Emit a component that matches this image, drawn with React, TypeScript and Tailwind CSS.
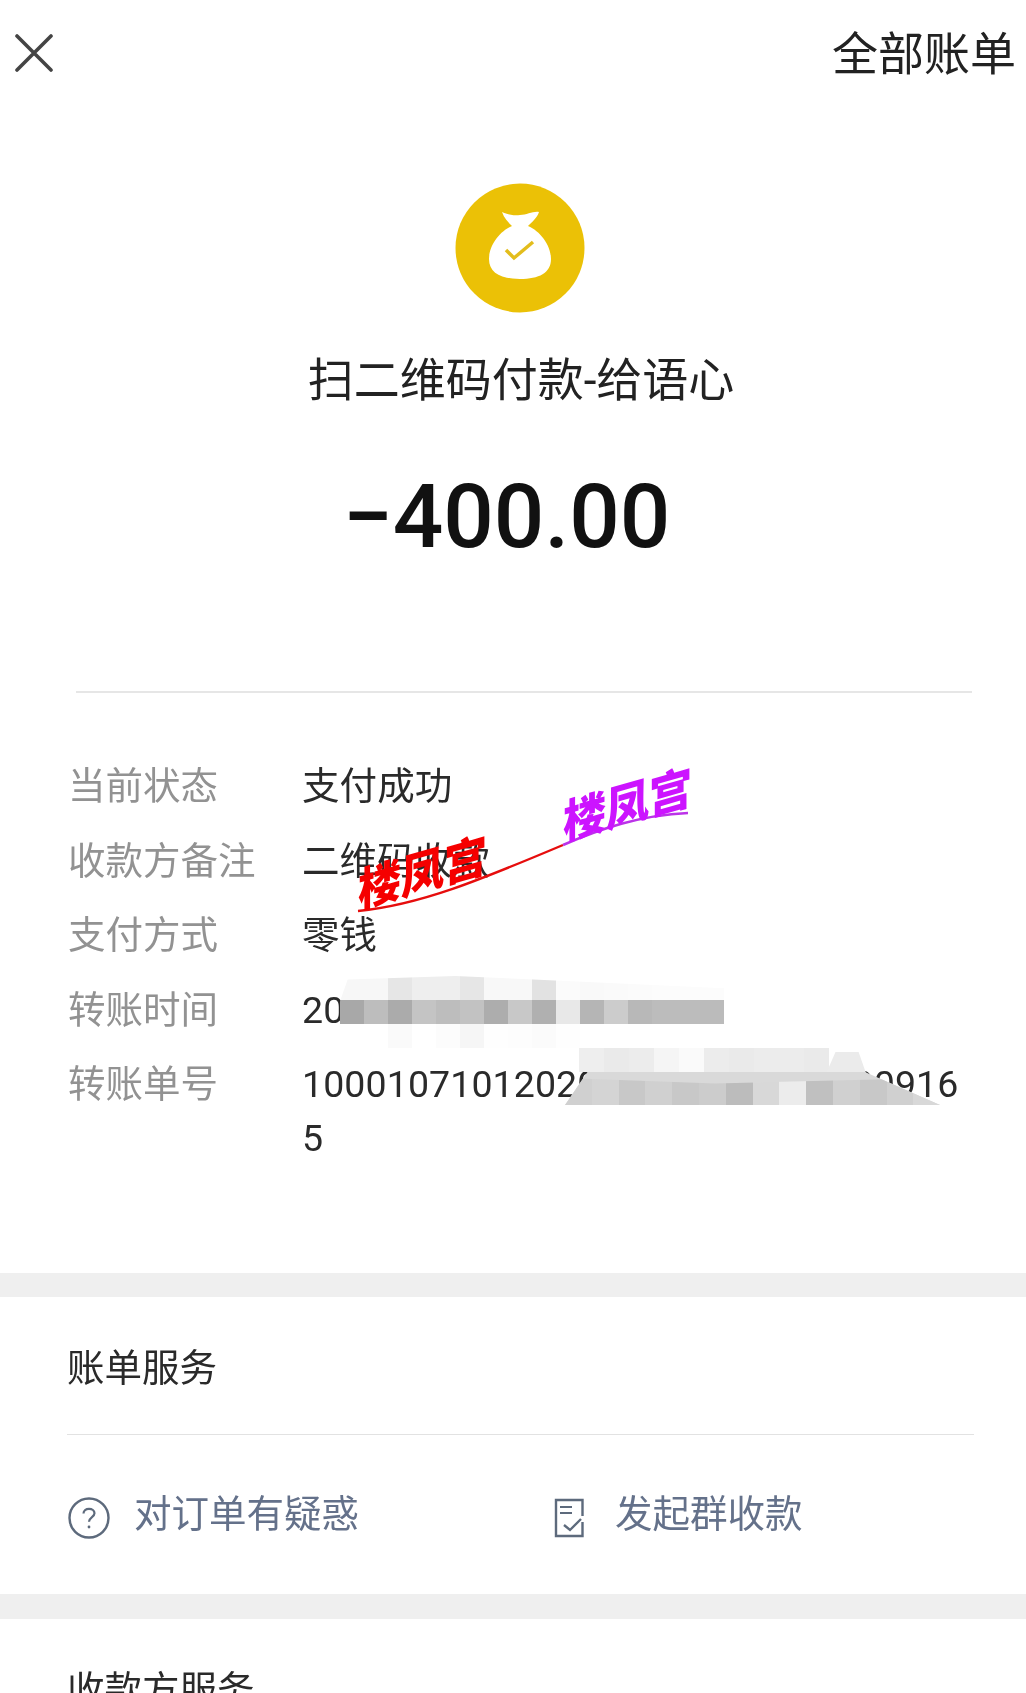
const FONT = "font-['Roboto','Noto_Sans_CJK_SC',sans-serif]";

const rows: [string, string][] = [
  ["当前状态", "支付成功"],
  ["收款方备注", "二维码收款"],
  ["支付方式", "零钱"],
  ["转账时间", "20"],
  ["转账单号", "10001071012020000000000000009165"],
];

const mosaicA = [
  ["bg-[#f7f7f7]", "bg-[#f7f7f7]", "bg-[#e6e6e6]", "bg-[#eeeeee]", "bg-[#eeeeee]", "bg-[#e6e6e6]", "bg-[#f8f8f8]", "bg-[#f8f8f8]", "bg-[#e2e2e2]", "bg-[#fbfbfb]", "bg-[#f9f9f9]", "bg-[#fafafa]", "bg-[#fbfbfb]", "bg-[#fcfcfc]", "bg-[#fcfcfc]", "bg-[#fcfcfc]"],
  ["bg-[#a8a8a8]", "bg-[#bdbdbd]", "bg-[#ababab]", "bg-[#c4c4c4]", "bg-[#bdbdbd]", "bg-[#c2c2c2]", "bg-[#adadad]", "bg-[#c8c8c8]", "bg-[#b0b0b0]", "bg-[#e8e8e8]", "bg-[#b5b5b5]", "bg-[#cccccc]", "bg-[#b8b8b8]", "bg-[#bcbcbc]", "bg-[#bcbcbc]", "bg-[#bbbbbb]"],
  ["bg-[#ffffff]", "bg-[#ffffff]", "bg-[#fafafa]", "bg-[#ffffff]", "bg-[#fcfcfc]", "bg-[#f6f6f6]", "bg-[#fefefe]", "bg-[#fdfdfd]", "bg-[#fbfbfb]", "bg-[#fefefe]", "bg-[#ffffff]", "bg-[#ffffff]", "bg-[#ffffff]", "bg-[#ffffff]", "bg-[#ffffff]", "bg-[#ffffff]"],
];
const mosaicTop = ["bg-[#eeeeee]", "bg-[#eaeaea]", "bg-[#ececec]", "bg-[#f5f5f5]", "bg-[#fafafa]", "bg-[#ececec]", "bg-[#eaeaea]", "bg-[#ececec]", "bg-[#ececec]", "bg-[#eaeaea]"];
const mosaicBottom = ["bg-[#d0d0d0]", "bg-[#d4d4d4]", "bg-[#c8c8c8]", "bg-[#d0d0d0]", "bg-[#c8c8c8]", "bg-[#cccccc]", "bg-[#bcbcbc]", "bg-[#d8d8d8]", "bg-[#ececec]", "bg-[#c0c0c0]", "bg-[#d0d0d0]", "bg-[#c8c8c8]", "bg-[#d0d0d0]", "bg-[#d8d8d8]"];

function Hero() {
  return (
    <div className="flex flex-col items-center">
      <svg viewBox="0 0 130 130" className="mt-[75px] ml-[14px] h-[130px] w-[130px]">
        <circle cx="65" cy="65" r="64.5" fill="#ebc106" />
        <path d="M47 29C52 31 58 33 65 32C72 32 78 28 84 29C82 35 77 39 73 43C85 48 96 62 96 76C96 90 84 96 65 96C46 96 34 90 34 76C34 62 45 48 57 43C53 39 49 35 47 29Z" fill="#ffffff" />
        <path d="M51 67L59 75L78 59" fill="none" stroke="#e3bd1c" strokeWidth="3.5" />
      </svg>
      <div className="mt-[37px] ml-[16px] h-[60px] text-[46px] leading-[60px] font-normal text-[#222]">扫二维码付款-给语心</div>
      <div className="mt-[62px] mr-[13px] h-[90px] text-[89px] leading-[90px] font-medium text-[#111]">−400.00</div>
    </div>
  );
}

function Details() {
  return (
    <div className="flex flex-col gap-[20.6px] pt-[66px] pl-[68px]">
      {rows.map(([k, v]) => (
        <div key={k} className="flex text-[37.5px] leading-[54px]">
          <div className="w-[234px] shrink-0 font-normal text-[#929292]">{k}</div>
          <div className="w-[665px] font-normal tracking-[0.1px] break-all text-[#2a2a2a]">{v}</div>
        </div>
      ))}
    </div>
  );
}

function QuestionIcon() {
  return (
    <svg viewBox="0 0 42 42" className="mt-2 h-[42px] w-[42px] shrink-0" fill="none" stroke="#5d6a7c" strokeWidth="2.4">
      <circle cx="21" cy="21" r="19.5" />
      <path d="M15.5 16.5C15.5 13.5 18 11.8 21 11.8C24 11.8 26.5 13.6 26.5 16.3C26.5 20 21 20.2 21 24.8" strokeWidth="2.2" />
      <circle cx="21" cy="30" r="1.4" fill="#5d6a7c" stroke="none" />
    </svg>
  );
}

function DocIcon() {
  return (
    <svg viewBox="0 0 30 40" className="mt-2 h-[40px] w-[30px] shrink-0" fill="none" stroke="#5d6a7c" strokeWidth="2.4">
      <path d="M28.5 18V2H2V38H28.5V24" />
      <path d="M6 9H18M6 15H18" strokeWidth="2.2" />
      <path d="M10 27L16 32L27 21" />
    </svg>
  );
}

export default function App() {
  return (
    <div className={`relative h-[1693px] w-[1026px] overflow-hidden bg-white blur-[0.5px] ${FONT}`}>
      <header className="flex h-[108px] items-center justify-between pr-[10px] pl-[15px]">
        <svg viewBox="0 0 38 38" className="mb-[2px] h-[38px] w-[38px]" fill="none" stroke="#444444" strokeWidth="3.6" strokeLinecap="round">
          <path d="M2 2L36 36M36 2L2 36" />
        </svg>
        <div className="text-[46px] leading-[60px] font-normal text-[#222]">全部账单</div>
      </header>

      <section className="h-[1165px]">
        <Hero />
        <div className="mt-[129px] mr-[54px] ml-[76px] h-[2px] bg-[#e6e6e6]" />
        <Details />
      </section>

      <div className="h-[24px] bg-[#efefef]" />

      <section className="h-[297px]">
        <div className="px-[67px] pt-[44px] pb-[39px] text-[37.5px] leading-[54px] font-normal text-[#2a2a2a]">账单服务</div>
        <div className="mr-[52px] ml-[67px] h-px bg-[#e2e2e2]" />
        <div className="flex h-[157px] items-center pl-[68px] text-[37.5px] leading-[54px] font-normal text-[#64718a]">
          <div className="flex w-[486px] items-center gap-[24px]">
            <QuestionIcon />
            <span>对订单有疑惑</span>
          </div>
          <div className="flex items-center gap-[31px]">
            <DocIcon />
            <span>发起群收款</span>
          </div>
        </div>
      </section>

      <div className="h-[25px] bg-[#efefef]" />

      <section className="px-[67px] pt-[44px] text-[37.5px] leading-[54px] font-normal text-[#2a2a2a]">收款方服务</section>

      {/* privacy mosaics lying over the details */}
      <div className="absolute top-[976px] left-[340px] flex flex-col [clip-path:polygon(2%_5%,30%_0,100%_17%,100%_100%,0_100%,0_35%)]">
        {mosaicA.map((row, i) => (
          <div key={i} className="flex">
            {row.map((c, j) => (
              <div key={j} className={`h-[24px] w-[24px] ${c}`} />
            ))}
          </div>
        ))}
      </div>
      <div className="absolute top-[1048px] left-[579px] flex">
        {mosaicTop.map((c, j) => (
          <div key={j} className={`h-[24px] w-[25px] ${c}`} />
        ))}
      </div>
      <div className="absolute top-[1052px] left-[825px] h-[24px] w-[42px] bg-[#ebebeb] [clip-path:polygon(25%_0,80%_0,100%_100%,0_100%)]" />
      <div className="absolute top-[1072px] left-[565px] h-[33px] w-[375px] bg-[#d9d9d9] [clip-path:polygon(6%_0,80%_0,100%_100%,0_100%)]">
        <div className="mt-[6px] flex [clip-path:polygon(0_0,40%_20%,100%_0,100%_100%,0_100%)]">
          {mosaicBottom.map((c, j) => (
            <div key={j} className={`h-[27px] w-[26.8px] shrink-0 ${c}`} />
          ))}
        </div>
      </div>

      {/* watermark */}
      <svg viewBox="0 0 1026 1693" className="absolute inset-0 h-[1693px] w-[1026px]" fill="none">
        <path d="M358 911C420 905 480 880 563 845" stroke="#e60d0d" strokeWidth="2.4" />
        <path d="M563 845C600 829 640 815 688 813" stroke="#bb33e8" strokeWidth="2.6" />
        <text transform="translate(358 908) skewY(-16) scale(1 1.08)" fontSize="43" fontWeight="900" fill="#f50000" fontFamily="'Noto Sans CJK SC', sans-serif">楼凤宫</text>
        <text transform="translate(563 840) skewY(-16) scale(1 1.08)" fontSize="43" fontWeight="900" fill="#cc14ff" fontFamily="'Noto Sans CJK SC', sans-serif">楼凤宫</text>
      </svg>
    </div>
  );
}
